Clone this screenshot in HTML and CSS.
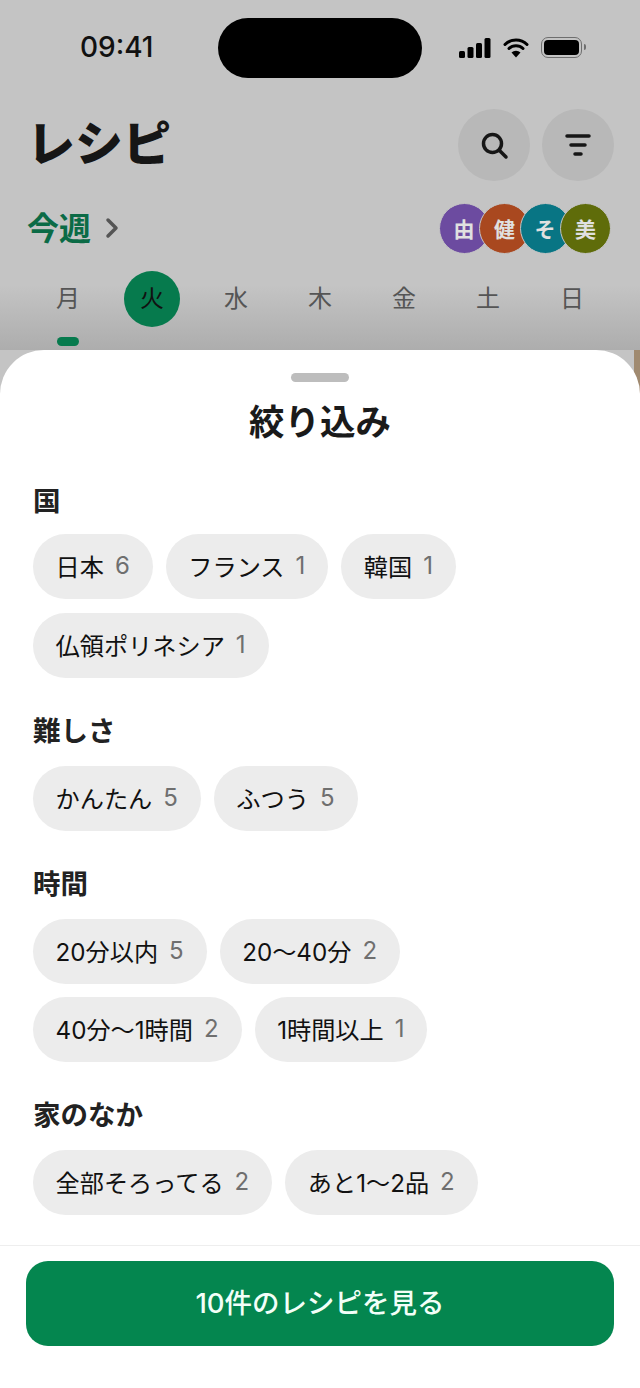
FILE: index.html
```html
<!DOCTYPE html>
<html lang="ja">
<head>
    <meta charset="UTF-8">
    <meta name="viewport" content="width=device-width, initial-scale=1.0">
    <title>レシピ</title>
    <link rel="stylesheet" href="styles.css">
</head>
<body>
    <div class="screen">
        <header class="top">
            <div class="status">
                <span class="time">09:41</span>
                <span class="island"></span>
                <span class="status-icons">
                    <svg width="32" height="20" viewBox="0 0 32 20">
                        <rect x="0" y="13" width="6" height="7" rx="1.5"/>
                        <rect x="8.5" y="9" width="6" height="11" rx="1.5"/>
                        <rect x="17" y="5" width="6" height="15" rx="1.5"/>
                        <rect x="25.5" y="0" width="6" height="20" rx="1.5"/>
                    </svg>
                    <svg width="26" height="21" viewBox="0 0 26 21">
                        <path d="M2 7.5a15.5 15.5 0 0 1 22 0M6 11.5a10 10 0 0 1 14 0" fill="none" stroke="#000" stroke-width="3" stroke-linecap="round"/>
                        <path d="M13 20.5l-4.500-5a6.500 6.500 0 0 1 9 0z"/>
                    </svg>
                    <span class="battery"><span class="battery-fill"></span></span>
                </span>
            </div>
            <div class="title-row">
                <h1>レシピ</h1>
                <div class="round-buttons">
                    <span class="round-button">
                        <svg width="30" height="30" viewBox="0 0 30 30" fill="none" stroke="#161616" stroke-width="3.5" stroke-linecap="round">
                            <circle cx="13.500" cy="13.500" r="9"/>
                            <path d="M20 20l7 7"/>
                        </svg>
                    </span>
                    <span class="round-button">
                        <svg width="26" height="22" viewBox="0 0 26 22" fill="none" stroke="#161616" stroke-width="3.5" stroke-linecap="round">
                            <path d="M2 2h22M6 11h14M10 20h6"/>
                        </svg>
                    </span>
                </div>
            </div>
            <div class="week-row">
                <span class="week">今週
                    <svg width="14" height="22" viewBox="0 0 14 22" fill="none" stroke="#555" stroke-width="3.500" stroke-linecap="round" stroke-linejoin="round">
                        <path d="M3 3l8 8-8 8"/>
                    </svg>
                </span>
                <div class="members">
                    <span class="member purple">由</span>
                    <span class="member rust">健</span>
                    <span class="member teal">そ</span>
                    <span class="member olive">美</span>
                </div>
            </div>
            <div class="days">
                <span class="day">月<i class="day-mark"></i></span>
                <span class="day active">火</span>
                <span class="day">水</span>
                <span class="day">木</span>
                <span class="day">金</span>
                <span class="day">土</span>
                <span class="day">日</span>
            </div>
        </header>

        <section class="sheet">
            <div class="handle"></div>
            <h2>絞り込み</h2>

            <div class="filter">
                <h3>国</h3>
                <div class="chips">
                    <span class="chip">日本<b>6</b></span>
                    <span class="chip">フランス<b>1</b></span>
                    <span class="chip">韓国<b>1</b></span>
                    <span class="chip">仏領ポリネシア<b>1</b></span>
                </div>
            </div>
            <div class="filter">
                <h3>難しさ</h3>
                <div class="chips">
                    <span class="chip">かんたん<b>5</b></span>
                    <span class="chip">ふつう<b>5</b></span>
                </div>
            </div>
            <div class="filter">
                <h3>時間</h3>
                <div class="chips">
                    <span class="chip">20分以内<b>5</b></span>
                    <span class="chip">20〜40分<b>2</b></span>
                    <span class="chip">40分〜1時間<b>2</b></span>
                    <span class="chip">1時間以上<b>1</b></span>
                </div>
            </div>
            <div class="filter">
                <h3>家のなか</h3>
                <div class="chips">
                    <span class="chip">全部そろってる<b>2</b></span>
                    <span class="chip">あと1〜2品<b>2</b></span>
                </div>
            </div>

            <div class="footer">
                <button class="submit">10件のレシピを見る</button>
            </div>
        </section>
    </div>
</body>
</html>
```

FILE: styles.css
```css
* {
    box-sizing: border-box;
}

body {
    margin: 0;
    font-family: Inter, "Noto Sans CJK JP", sans-serif;
    color: #1a1a1a;
    background-color: #fff;
}

.screen {
    width: 640px;
    height: 1388px;
    display: flex;
    flex-direction: column;
    overflow: hidden;
    background: linear-gradient(90deg, #c4c4c4 99%, #a08a70 99%);
}

.top {
    height: 350px;
    flex: none;
    background: linear-gradient(#c4c4c4 0, #c4c4c4 285px, #adadad 350px);
}

.status {
    height: 96px;
    padding: 18px 53px 0 80px;
    display: flex;
    align-items: flex-start;
}

.time {
    width: 138px;
    margin-top: 12px;
    font-family: Inter, sans-serif;
    font-size: 28px;
    line-height: 35px;
    font-weight: 500;
    color: #111;
}

.island {
    width: 204px;
    height: 60px;
    border-radius: 30px;
    background-color: #000;
}

.status-icons {
    margin: 19px 0 0 37px;
    display: flex;
    align-items: center;
    gap: 12px;
}

.battery {
    position: relative;
    width: 41px;
    height: 21px;
    padding: 2px;
    border: 1.500px solid #6e6e6e;
    border-radius: 7px;
}

.battery::after {
    content: "";
    position: absolute;
    right: -5px;
    top: 6px;
    width: 2px;
    height: 6px;
    border-radius: 0 2px 2px 0;
    background-color: #6e6e6e;
}

.battery-fill {
    display: block;
    height: 100%;
    border-radius: 4px;
    background-color: #000;
}

.title-row {
    height: 102px;
    padding: 13px 26px 0 27px;
    display: flex;
    justify-content: space-between;
}

h1 {
    margin: 2px 0 0;
    font-size: 48px;
    line-height: 66px;
    font-weight: 900;
    color: #161616;
}

.round-buttons {
    display: flex;
    gap: 12px;
}

.round-button {
    width: 72px;
    height: 72px;
    border-radius: 50%;
    background-color: #b8b8b8;
    display: flex;
    align-items: center;
    justify-content: center;
}

.week-row {
    height: 60px;
    padding: 0 29px 0 27px;
    display: flex;
    align-items: center;
    justify-content: space-between;
}

.week {
    padding-bottom: 4px;
    display: flex;
    align-items: center;
    gap: 14px;
    font-size: 32px;
    font-weight: 600;
    color: #0b6b46;
}

.week svg {
    margin-top: 4px;
}

.members {
    display: flex;
}

.member {
    width: 51px;
    height: 51px;
    margin-left: -10.5px;
    border-radius: 50%;
    border: 1.500px solid #c4c4c4;
    display: flex;
    align-items: center;
    justify-content: center;
    font-size: 21px;
    font-weight: 700;
    color: #e0e0e0;
}

.purple { background-color: #6c4ba0; }
.rust { background-color: #a9481f; }
.teal { background-color: #087584; }
.olive { background-color: #5f6c0a; }

.days {
    height: 56px;
    margin-top: 13px;
    padding: 0 40px;
    display: grid;
    grid-template-columns: repeat(7, 56px);
    column-gap: 28px;
}

.day {
    position: relative;
    height: 56px;
    padding-bottom: 5px;
    display: flex;
    align-items: center;
    justify-content: center;
    font-size: 24px;
    color: #555;
}

.day.active {
    border-radius: 50%;
    background-color: #067a4d;
    color: #111;
}

.day-mark {
    position: absolute;
    left: 17px;
    top: 66px;
    width: 22px;
    height: 9px;
    border-radius: 5px;
    background-color: #067a4d;
}

.sheet {
    position: relative;
    flex: 1;
    padding: 0 33px;
    border-radius: 44px 44px 0 0;
    background-color: #fff;
}

.handle {
    width: 58px;
    height: 9px;
    margin: 23px auto 0;
    border-radius: 5px;
    background-color: #bdbdbd;
}

h2 {
    margin: 16px 0 0;
    text-align: center;
    font-size: 35.5px;
    line-height: 50px;
    font-weight: 700;
    color: #1a1a1a;
}

.filter {
    margin-top: 34px;
}

h3 {
    margin: 0 0 14px;
    font-size: 27.5px;
    line-height: 38px;
    font-weight: 700;
    color: #222;
}

.filter + .filter h3 {
    margin-bottom: 16px;
}

.chips {
    display: flex;
    flex-wrap: wrap;
    gap: 13.5px 13px;
}

.chip {
    height: 65px;
    padding: 0 23px 2px 22.5px;
    border-radius: 33px;
    background-color: #ececec;
    display: flex;
    align-items: center;
    font-size: 24.2px;
    font-weight: 400;
    color: #111;
}

.chip b {
    margin-left: 11px;
    font-size: 24px;
    font-weight: 400;
    color: #6f6f6f;
}

.footer {
    position: absolute;
    left: 0;
    right: 0;
    top: 895px;
    padding: 15px 26px 0;
    border-top: 1px solid #eeeeee;
}

.submit {
    width: 100%;
    height: 85px;
    padding-bottom: 7px;
    border: none;
    border-radius: 22px;
    background-color: #04864f;
    font-family: inherit;
    font-size: 27.5px;
    font-weight: 500;
    color: #f2fff8;
}
```
